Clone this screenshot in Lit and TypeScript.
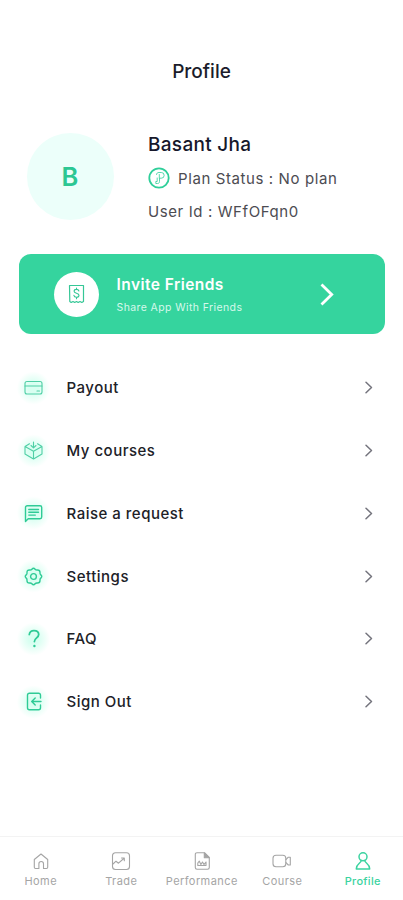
import { LitElement, html, svg, css } from "lit";
import { customElement } from "lit/decorators.js";
import { classMap } from "lit/directives/class-map.js";

const menu = [
  {
    label: "Payout",
    cls: "m-payout",
    soft: true,
    icon: svg`<rect x="1" y="3.5" width="17" height="12.5" rx="2"/><path d="M1 8h17M13 13h2.5"/>`,
  },
  {
    label: "My courses",
    cls: "m-courses",
    soft: true,
    icon: svg`<path d="M5.500 2.800 1 5.500v7.500l8.500 5 8.500-5V5.500L13.500 2.800M1 5.500l8.500 4.800L18 5.500M9.500 10.300V18M9.500 1v5.500M7 4.500l2.500 2.300L12 4.500"/>`,
  },
  {
    label: "Raise a request",
    cls: "m-raise",
    soft: false,
    icon: svg`<path d="M1.500 17.500V3.500a1.700 1.700 0 0 1 1.700-1.700h12.800a1.700 1.700 0 0 1 1.700 1.700v9.600a1.700 1.700 0 0 1-1.700 1.700H4.200zM4.800 5.500h9.700M4.800 8.300h9.700M4.800 11.100h6.500"/>`,
  },
  {
    label: "Settings",
    cls: "m-settings",
    soft: false,
    icon: svg`<path d="M7.900 2.200Q9.500.3 11.100 2.200Q12 3.300 13.500 3Q16 3 16 5.500Q15.700 7 16.800 7.900Q18.700 9.500 16.800 11.100Q15.700 12 16 13.500Q16 16 13.500 16Q12 15.700 11.100 16.800Q9.500 18.700 7.900 16.800Q7 15.700 5.500 16Q3 16 3 13.500Q3.300 12 2.200 11.100Q.3 9.500 2.200 7.900Q3.300 7 3 5.500Q3 3 5.500 3Q7 3.300 7.900 2.200z"/><circle cx="9.500" cy="9.500" r="2.900"/>`,
  },
  {
    label: "FAQ",
    cls: "m-faq",
    soft: false,
    icon: svg`<path stroke-width="1.800" d="M5.300 5.500C5.600 3 7.500 1.600 10 1.600c2.700 0 4.700 1.600 4.700 4 0 3.300-4.300 3.400-4.300 7"/><circle class="dot" cx="10.400" cy="17" r="1.200"/>`,
  },
  {
    label: "Sign Out",
    cls: "m-out",
    soft: false,
    icon: svg`<path d="M16.500 6V3.200a1.900 1.900 0 0 0-1.900-1.900H5.400a1.900 1.900 0 0 0-1.900 1.900v12.600a1.900 1.900 0 0 0 1.900 1.900h9.200a1.900 1.900 0 0 0 1.900-1.900V13M17 9.500H8M11.200 6 7.700 9.500l3.500 3.500"/>`,
  },
];

const tabs = [
  {
    label: "Home",
    cls: "t-home",
    icon: svg`<path d="M4.500 17.500a1.200 1.200 0 0 1-1.200-1.200V8.500L10 3l6.700 5.500v7.800a1.200 1.200 0 0 1-1.200 1.200h-3v-4.700a2.300 2.300 0 0 0-4.600 0v4.700z"/>`,
  },
  {
    label: "Trade",
    cls: "t-trade",
    icon: svg`<rect x="1.500" y="1.700" width="17" height="16.800" rx="3"/><path d="M2 13l3-2.800 2.500 2L12.800 7.500M10.500 7h2.800v2.800"/>`,
  },
  {
    label: "Performance",
    cls: "t-perf",
    icon: svg`<path d="M5 1.700h7.500l4.800 4.800v10a1.700 1.700 0 0 1-1.700 1.700H5a1.700 1.700 0 0 1-1.700-1.700v-13A1.700 1.700 0 0 1 5 1.700z"/><path fill="currentColor" d="M12.300 2v4.700h4.700z"/><path d="M5.800 14.500v-2.500l1.500-1.800 1.600 3.300 1.600-2.500 1.500 2.500 2-2.500v3.500z"/>`,
  },
  {
    label: "Course",
    cls: "t-course",
    icon: svg`<rect x="1" y="4.300" width="12.800" height="11.500" rx="3"/><path d="M14 8.500l2.300-2.300h2v7.800h-2L14 11.700"/>`,
  },
  {
    label: "Profile",
    cls: "t-profile",
    active: true,
    icon: svg`<circle cx="10" cy="5.800" r="4"/><path d="M8.300 9.500C8 12.500 3.300 12.500 3.300 18h13.400c0-5.500-4.700-5.500-5-8.500"/>`,
  },
];

@customElement("app-root")
export class AppRoot extends LitElement {
  static styles = css`
    :host {
      display: flex;
      flex-direction: column;
      height: 900px;
      background: #fff;
      color: #1b1c2b;
      font-family: Inter, sans-serif;
      overflow: hidden;
    }
    * { box-sizing: border-box; }
    svg { display: block; fill: none; stroke: currentColor; stroke-linecap: round; stroke-linejoin: round; }
    .title {
      margin: 0;
      padding-top: 59px;
      height: 132px;
      line-height: 26px;
      font-size: 19px;
      font-weight: 500;
      text-align: center;
    }
    .user { display: flex; height: 122px; padding-left: 26.500px; }
    .avatar {
      display: grid;
      place-items: center;
      width: 87px;
      height: 87px;
      margin-top: 1px;
      border-radius: 50%;
      background: #ecfffa;
      color: #2cc793;
      font-size: 25.500px;
      font-weight: 600;
    }
    .info { margin-left: 34.500px; white-space: nowrap; color: #4c4c52; font-size: 15px; }
    .name { height: 26px; line-height: 26px; font-size: 19px; font-weight: 500; color: #17182b; letter-spacing: 0.3px; }
    .plan { display: flex; align-items: center; height: 40px; letter-spacing: 0.6px; }
    .plan svg { width: 22px; height: 22px; margin-right: 8px; color: #2fcf9a; }
    .uid { height: 28px; line-height: 28px; letter-spacing: 0.6px; }
    .invite {
      display: flex;
      align-items: center;
      flex: none;
      width: 366px;
      height: 80px;
      margin-left: 19px;
      padding-left: 34.500px;
      border-radius: 12px;
      background: #35d49e;
      color: #fff;
    }
    .coin { display: grid; place-items: center; width: 45px; height: 45px; border-radius: 50%; background: #fff; color: #35c796; }
    .coin svg { width: 17px; height: 20px; }
    .words { margin-left: 18px; padding-top: 3px; width: 203px; white-space: nowrap; }
    .big { line-height: 22px; font-size: 15.500px; font-weight: 600; letter-spacing: 0.45px; }
    .small { margin-top: 2px; line-height: 20px; font-size: 10.500px; color: #d6f8eb; letter-spacing: 0.4px; }
    .go { width: 14px; height: 23px; }
    .menu { margin-top: 22.400px; }
    .row { display: flex; align-items: center; height: 62.800px; padding: 0 30px 0 16px; }
    .halo { display: grid; place-items: center; width: 35px; height: 34px; background: radial-gradient(circle, #d8fff1 20%, #fff 68%); color: #2fcb96; }
    .halo svg { width: 19px; height: 19px; stroke-width: 1.400; }
    .halo.soft { color: #4fcfa5; }
    .halo.soft svg { stroke-width: 1.100; }
    .dot { fill: currentColor; stroke: none; }
    .label { flex: 1; margin-left: 15.500px; font-size: 15px; font-weight: 500; letter-spacing: 0.5px; color: #202127; white-space: nowrap; }
    .chev { width: 9px; height: 13px; color: #74747d; }
    .bar { display: flex; height: 64px; margin-top: auto; padding: 14px 0 0 0.500px; border-top: 1px solid #f3f3f3; }
    .tab { display: flex; flex-direction: column; align-items: center; flex: none; width: 80.500px; color: #a5a5a5; }
    .tab svg { width: 20px; height: 20px; stroke-width: 1.100; }
    .tab .cap { margin-top: 2px; line-height: 16px; font-size: 11px; letter-spacing: 0.42px; }
    .tab.on { color: #3bd3a0; }
    .tab.on svg { stroke-width: 1.500; }
    .tab.on .cap { font-weight: 500; letter-spacing: 0.3px; }
  `;

  render() {
    return html`
      <h1 class="title"><span>Profile</span></h1>
      <section class="user">
        <div class="avatar">B</div>
        <div class="info">
          <div class="name"><span>Basant Jha</span></div>
          <div class="plan">
            <svg viewBox="0 0 22 22"><circle cx="11" cy="11" r="9.700" stroke-width="1.800"/><path stroke-width=".8" d="M8.500 7.500c0-1.300 1-2 2.500-2h2.300a2.800 2.800 0 0 1 0 5.700h-1.800v3.300c0 1.300-.7 2-2 2H7.800v-2h1.400V11M11.300 7.500v3.700"/></svg>
            <span>Plan Status : No plan</span>
          </div>
          <div class="uid"><span>User Id : WFfOFqn0</span></div>
        </div>
      </section>
      <section class="invite">
        <div class="coin">
          <svg viewBox="0 0 17 20"><path stroke-width="1.200" d="M1.500 1.500h14v16l-1.700 1-1.800-1-1.800 1-1.700-1-1.800 1-1.700-1-1.800 1-1.400-1z"/><path stroke-width="1.100" d="M10.900 7c-.3-1.100-1.200-1.600-2.400-1.600-1.400 0-2.400.7-2.400 1.900 0 2.600 4.900 1.200 4.900 4 0 1.200-1.100 2-2.500 2s-2.400-.7-2.600-1.900M8.500 4v1.400M8.500 13.300v1.400"/></svg>
        </div>
        <div class="words">
          <div class="big"><span>Invite Friends</span></div>
          <div class="small"><span>Share App With Friends</span></div>
        </div>
        <svg class="go" viewBox="0 0 14 23"><path stroke-width="2.800" stroke-linecap="butt" stroke-linejoin="miter" d="M1.500 1.500 11.700 11.500 1.500 21.500"/></svg>
      </section>
      <nav class="menu">
        ${menu.map(
          (m) => html`<div class="row ${m.cls}">
            <div class=${classMap({ halo: true, soft: m.soft })}><svg viewBox="0 0 19 19">${m.icon}</svg></div>
            <div class="label"><span>${m.label}</span></div>
            <svg class="chev" viewBox="0 0 9 13"><path stroke-width="1.500" d="M2 1.200 7.500 6.500 2 11.800"/></svg>
          </div>`
        )}
      </nav>
      <footer class="bar">
        ${tabs.map(
          (t) => html`<div class="tab ${t.cls} ${t.active ? "on" : ""}">
            <svg viewBox="0 0 20 20">${t.icon}</svg>
            <span class="cap">${t.label}</span>
          </div>`
        )}
      </footer>
    `;
  }
}
